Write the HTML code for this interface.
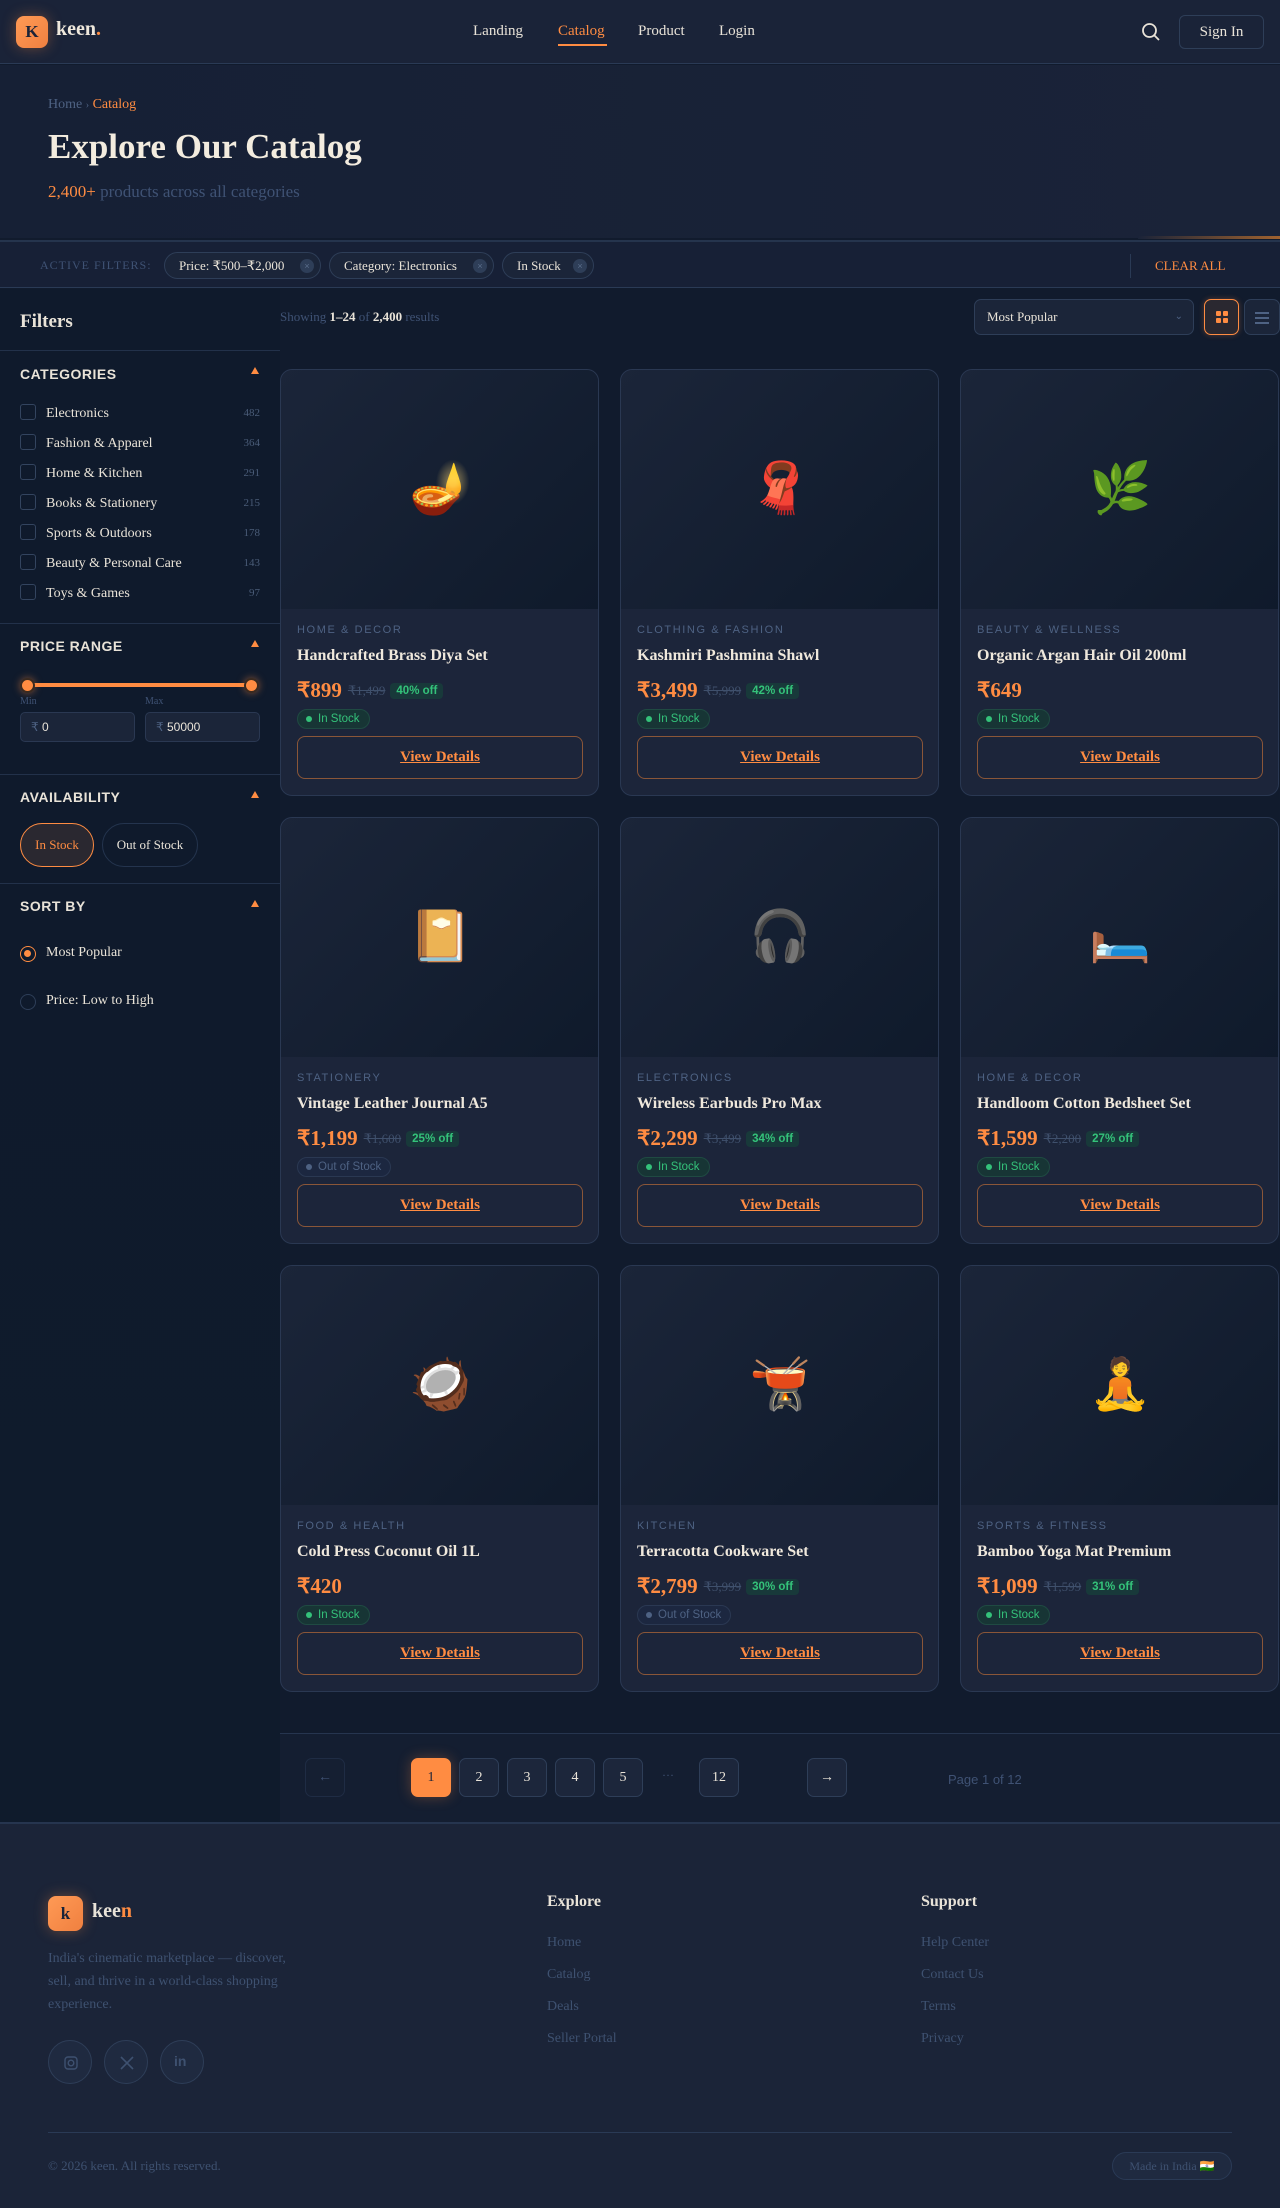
<!DOCTYPE html>
<html><head><meta charset="utf-8">
<style>
*{box-sizing:border-box;margin:0;padding:0}
body{width:1280px;height:2208px;background:#111b2d;font-family:"Liberation Serif",serif;color:#e9e3d8;position:relative;overflow:hidden}
.abs{position:absolute}
.sans{font-family:"Liberation Sans",sans-serif}
.nav{left:0;top:0;width:1280px;height:64px;background:#1a2338;border-bottom:1px solid #2a3a55}
.logo{left:16px;top:16px;width:32px;height:32px;border-radius:8px;background:linear-gradient(135deg,#ff9a55,#f08040);color:#1a2338;font-size:17px;font-weight:bold;text-align:center;line-height:32px;box-shadow:0 0 14px rgba(255,140,66,.35)}
.navl{top:23px;font-size:15px;color:#e9e3d8}
.hero{left:0;top:65px;width:1280px;height:173px;background:linear-gradient(90deg,#162035,#1a2338)}
.fbar{left:0;top:240px;width:1280px;height:48px;background:#172036;border-top:2px solid #25344d;border-bottom:1px solid #2a3a55}
.chip{top:10px;height:27px;border:1px solid #2e3e58;border-radius:14px;background:#1b2539;font-size:13px;line-height:25px;padding-left:14px;color:#e9e3d8}
.chip i{position:absolute;right:6px;top:6px;width:14px;height:14px;border-radius:7px;background:#2e3e58;font-style:normal;font-size:9px;line-height:14px;text-align:center;color:#5a6d8a;font-family:"Liberation Sans",sans-serif}
.side{left:0;top:289px;width:280px;height:1533px;background:linear-gradient(180deg,#0f1a2c,#0f1b2c)}
.sh{left:20px;font-family:"Liberation Sans",sans-serif;font-weight:bold;font-size:14px;letter-spacing:.5px;color:#e9e3d8}
.tri{left:251px;width:0;height:0;border-left:4px solid transparent;border-right:4px solid transparent;border-bottom:7px solid #ff8c42}
.hr{left:0;width:280px;height:1px;background:#22314a}
.cat{left:20px;font-size:14px;color:#e9e3d8}
.cat b{display:inline-block;width:16px;height:16px;border:1.5px solid #33445f;border-radius:3px;vertical-align:-3px;margin-right:10px}
.cnt{left:240px;width:20px;text-align:right;font-size:11px;color:#4a5c78}
.card{width:319px;height:427px;border:1px solid #2a3852;border-radius:12px;background:#1c253a;overflow:hidden}
.img{left:0;top:0;width:319px;height:239px;background:linear-gradient(135deg,#1b2539,#0f1a2b);font-size:50px;text-align:center;line-height:239px;font-family:"Noto Color Emoji",sans-serif}
.lab{left:16px;top:254px;font-family:"Liberation Sans",sans-serif;font-size:11px;letter-spacing:1.6px;color:#4e6283}
.tit{left:16px;top:277px;font-size:16px;font-weight:bold;color:#efe8dc}
.pr{left:16px;top:308px;font-size:21px;font-weight:bold;color:#ff8c42;white-space:nowrap}
.pr s{font-size:13px;font-weight:normal;color:#3f506c;margin-left:6px;vertical-align:2px}
.pr em{font-style:normal;font-family:"Liberation Sans",sans-serif;font-size:11.5px;font-weight:bold;color:#34c27a;background:#18393a;border-radius:4px;padding:2px 6px;margin-left:5px;vertical-align:3px}
.st{left:16px;top:339px;height:20px;border-radius:10px;font-family:"Liberation Sans",sans-serif;font-size:11.5px;line-height:18px;padding:0 9px 0 20px}
.st:before{content:"";position:absolute;left:8px;top:6px;width:6px;height:6px;border-radius:3px;background:currentColor}
.in{color:#34c27a;background:#173535;border:1px solid #1f4a42}
.out{color:#4e6283;background:#1c2740;border:1px solid #2a3852}
.btn{left:16px;top:366px;width:286px;height:43px;border:1px solid #8a5638;border-radius:8px;text-align:center;line-height:41px;font-size:15px;font-weight:bold;color:#ff8c42;text-decoration:underline}
.pg{top:1758px;width:40px;height:39px;border:1px solid #2e3e58;border-radius:7px;background:#1c263b;text-align:center;line-height:37px;font-size:14px;color:#e9e3d8}
.foot{left:0;top:1822px;width:1280px;height:386px;background:#1b2438;border-top:2px solid #26354f}
.fl{font-size:14px;color:#3e5170}
.soc{top:2040px;width:44px;height:44px;border-radius:22px;border:1px solid #2e3e58;background:#1f2a40}
</style></head><body>

<div class="abs nav"></div>
<div class="abs logo">K</div>
<div class="abs" style="left:56px;top:18px;font-size:20px;font-weight:bold;color:#efe8dc">keen<span style="color:#ff8c42">.</span></div>
<div class="abs navl" style="left:473px">Landing</div>
<div class="abs navl" style="left:558px;color:#ff8c42">Catalog</div>
<div class="abs" style="left:558px;top:44px;width:49px;height:2px;background:#ff8c42"></div>
<div class="abs navl" style="left:638px">Product</div>
<div class="abs navl" style="left:719px">Login</div>
<svg class="abs" style="left:1141px;top:22px" width="20" height="20" viewBox="0 0 20 20" fill="none" stroke="#e9e3d8" stroke-width="1.8"><circle cx="8.5" cy="8.5" r="6.5"/><path d="M13.5 13.5L18 18"/></svg>
<div class="abs" style="left:1179px;top:15px;width:85px;height:34px;border:1px solid #2e3e58;border-radius:6px;text-align:center;line-height:32px;font-size:15px">Sign In</div>

<div class="abs hero"></div>
<div class="abs" style="left:48px;top:97px;font-size:14px;color:#4e6283">Home <span style="font-size:10px">›</span> <span style="color:#ff8c42">Catalog</span></div>
<div class="abs" style="left:48px;top:127px;font-size:35px;font-weight:bold;color:#f3ecdf">Explore Our Catalog</div>
<div class="abs" style="left:48px;top:182px;font-size:17px;color:#3f5274"><span style="color:#ff8c42">2,400+</span> products across all categories</div>
<div class="abs" style="left:1138px;top:236px;width:142px;height:3px;background:linear-gradient(90deg,#1a2338,#a0622f)"></div>

<div class="abs fbar">
 <div class="abs sans" style="left:40px;top:16px;font-size:12px;letter-spacing:1px;color:#3f5274;font-family:'Liberation Serif',serif">ACTIVE FILTERS:</div>
 <div class="abs chip" style="left:164px;width:157px">Price: ₹500–₹2,000<i>×</i></div>
 <div class="abs chip" style="left:329px;width:165px">Category: Electronics<i>×</i></div>
 <div class="abs chip" style="left:502px;width:92px">In Stock<i>×</i></div>
 <div class="abs" style="left:1130px;top:12px;width:1px;height:24px;background:#2a3a55"></div>
 <div class="abs" style="left:1155px;top:16px;font-size:13px;color:#ff8c42">CLEAR ALL</div>
</div>

<div class="abs side"></div>
<div class="abs" style="left:20px;top:311px;font-size:19px;font-weight:bold">Filters</div>
<div class="abs hr" style="top:350px"></div>
<div class="abs sh" style="top:366px">CATEGORIES</div><div class="abs tri" style="top:367px"></div>
<div class="abs cat" style="top:404px"><b></b>Electronics</div><div class="abs cnt" style="top:407px">482</div>
<div class="abs cat" style="top:434px"><b></b>Fashion &amp; Apparel</div><div class="abs cnt" style="top:437px">364</div>
<div class="abs cat" style="top:464px"><b></b>Home &amp; Kitchen</div><div class="abs cnt" style="top:467px">291</div>
<div class="abs cat" style="top:494px"><b></b>Books &amp; Stationery</div><div class="abs cnt" style="top:497px">215</div>
<div class="abs cat" style="top:524px"><b></b>Sports &amp; Outdoors</div><div class="abs cnt" style="top:527px">178</div>
<div class="abs cat" style="top:554px"><b></b>Beauty &amp; Personal Care</div><div class="abs cnt" style="top:557px">143</div>
<div class="abs cat" style="top:584px"><b></b>Toys &amp; Games</div><div class="abs cnt" style="top:587px">97</div>
<div class="abs hr" style="top:623px"></div>
<div class="abs sh" style="top:638px">PRICE RANGE</div><div class="abs tri" style="top:640px"></div>
<div class="abs" style="left:28px;top:683px;width:224px;height:4px;background:#ff8c42;border-radius:2px"></div>
<div class="abs" style="left:20px;top:678px;width:15px;height:15px;border-radius:8px;background:#ff8c42;border:2px solid #3a2a20;box-shadow:0 0 8px rgba(255,140,66,.5)"></div>
<div class="abs" style="left:244px;top:678px;width:15px;height:15px;border-radius:8px;background:#ff8c42;border:2px solid #3a2a20;box-shadow:0 0 8px rgba(255,140,66,.5)"></div>
<div class="abs" style="left:20px;top:696px;font-size:10px;color:#3f5274">Min</div>
<div class="abs" style="left:145px;top:696px;font-size:10px;color:#3f5274">Max</div>
<div class="abs sans" style="left:20px;top:712px;width:115px;height:30px;border:1px solid #2a3852;border-radius:5px;background:#1b2539;font-size:12px;line-height:28px;padding-left:10px"><span style="color:#4e6283">₹</span> 0</div>
<div class="abs sans" style="left:145px;top:712px;width:115px;height:30px;border:1px solid #2a3852;border-radius:5px;background:#1b2539;font-size:12px;line-height:28px;padding-left:10px"><span style="color:#4e6283">₹</span> 50000</div>
<div class="abs hr" style="top:774px"></div>
<div class="abs sh" style="top:789px">AVAILABILITY</div><div class="abs tri" style="top:791px"></div>
<div class="abs" style="left:20px;top:823px;width:74px;height:44px;border:1px solid #ff8c42;border-radius:22px;background:#2a2830;text-align:center;line-height:42px;font-size:13px;color:#ff8c42">In Stock</div>
<div class="abs" style="left:102px;top:823px;width:96px;height:44px;border:1px solid #24344e;border-radius:22px;text-align:center;line-height:42px;font-size:13px">Out of Stock</div>
<div class="abs hr" style="top:883px"></div>
<div class="abs sh" style="top:898px">SORT BY</div><div class="abs tri" style="top:900px"></div>
<div class="abs" style="left:20px;top:946px;width:16px;height:16px;border-radius:8px;border:1.5px solid #ff8c42"><div style="margin:3px;width:7px;height:7px;border-radius:4px;background:#ff8c42"></div></div>
<div class="abs" style="left:46px;top:945px;font-size:14px">Most Popular</div>
<div class="abs" style="left:20px;top:994px;width:16px;height:16px;border-radius:8px;border:1.5px solid #2e3e58"></div>
<div class="abs" style="left:46px;top:993px;font-size:14px">Price: Low to High</div>

<div class="abs" style="left:280px;top:309px;font-size:13px;color:#3f5274">Showing <b style="color:#e9e3d8">1–24</b> of <b style="color:#e9e3d8">2,400</b> results</div>
<div class="abs" style="left:974px;top:299px;width:220px;height:36px;border:1px solid #2e3e58;border-radius:7px;background:#1b2539;font-size:13px;line-height:34px;padding-left:12px">Most Popular<span class="abs sans" style="right:10px;top:0;font-size:10px;color:#4e6283">⌄</span></div>
<div class="abs" style="left:1204px;top:299px;width:35px;height:36px;border:1px solid #ff8c42;border-radius:7px;background:#2a2830;box-shadow:0 0 6px rgba(255,140,66,.3)">
 <div class="abs" style="left:11px;top:11px;width:5px;height:5px;background:#ff8c42;border-radius:1px"></div><div class="abs" style="left:18px;top:11px;width:5px;height:5px;background:#ff8c42;border-radius:1px"></div>
 <div class="abs" style="left:11px;top:18px;width:5px;height:5px;background:#ff8c42;border-radius:1px"></div><div class="abs" style="left:18px;top:18px;width:5px;height:5px;background:#ff8c42;border-radius:1px"></div></div>
<div class="abs" style="left:1244px;top:299px;width:36px;height:36px;border:1px solid #2e3e58;border-radius:7px;background:#1b2539">
 <div class="abs" style="left:10px;top:12px;width:14px;height:2px;background:#4e6283"></div><div class="abs" style="left:10px;top:17px;width:14px;height:2px;background:#4e6283"></div><div class="abs" style="left:10px;top:22px;width:14px;height:2px;background:#4e6283"></div></div>

<!-- Row 1 -->
<div class="abs card" style="left:280px;top:369px"><div class="abs img">🪔</div><div class="abs lab">HOME &amp; DECOR</div><div class="abs tit">Handcrafted Brass Diya Set</div><div class="abs pr">₹899<s>₹1,499</s><em>40% off</em></div><div class="abs st in">In Stock</div><div class="abs btn">View Details</div></div>
<div class="abs card" style="left:620px;top:369px"><div class="abs img">🧣</div><div class="abs lab">CLOTHING &amp; FASHION</div><div class="abs tit">Kashmiri Pashmina Shawl</div><div class="abs pr">₹3,499<s>₹5,999</s><em>42% off</em></div><div class="abs st in">In Stock</div><div class="abs btn">View Details</div></div>
<div class="abs card" style="left:960px;top:369px"><div class="abs img">🌿</div><div class="abs lab">BEAUTY &amp; WELLNESS</div><div class="abs tit">Organic Argan Hair Oil 200ml</div><div class="abs pr">₹649</div><div class="abs st in">In Stock</div><div class="abs btn">View Details</div></div>
<!-- Row 2 -->
<div class="abs card" style="left:280px;top:817px"><div class="abs img">📔</div><div class="abs lab">STATIONERY</div><div class="abs tit">Vintage Leather Journal A5</div><div class="abs pr">₹1,199<s>₹1,600</s><em>25% off</em></div><div class="abs st out">Out of Stock</div><div class="abs btn">View Details</div></div>
<div class="abs card" style="left:620px;top:817px"><div class="abs img">🎧</div><div class="abs lab">ELECTRONICS</div><div class="abs tit">Wireless Earbuds Pro Max</div><div class="abs pr">₹2,299<s>₹3,499</s><em>34% off</em></div><div class="abs st in">In Stock</div><div class="abs btn">View Details</div></div>
<div class="abs card" style="left:960px;top:817px"><div class="abs img">🛏️</div><div class="abs lab">HOME &amp; DECOR</div><div class="abs tit">Handloom Cotton Bedsheet Set</div><div class="abs pr">₹1,599<s>₹2,200</s><em>27% off</em></div><div class="abs st in">In Stock</div><div class="abs btn">View Details</div></div>
<!-- Row 3 -->
<div class="abs card" style="left:280px;top:1265px"><div class="abs img">🥥</div><div class="abs lab">FOOD &amp; HEALTH</div><div class="abs tit">Cold Press Coconut Oil 1L</div><div class="abs pr">₹420</div><div class="abs st in">In Stock</div><div class="abs btn">View Details</div></div>
<div class="abs card" style="left:620px;top:1265px"><div class="abs img">🫕</div><div class="abs lab">KITCHEN</div><div class="abs tit">Terracotta Cookware Set</div><div class="abs pr">₹2,799<s>₹3,999</s><em>30% off</em></div><div class="abs st out">Out of Stock</div><div class="abs btn">View Details</div></div>
<div class="abs card" style="left:960px;top:1265px"><div class="abs img">🧘</div><div class="abs lab">SPORTS &amp; FITNESS</div><div class="abs tit">Bamboo Yoga Mat Premium</div><div class="abs pr">₹1,099<s>₹1,599</s><em>31% off</em></div><div class="abs st in">In Stock</div><div class="abs btn">View Details</div></div>

<!-- Pagination -->
<div class="abs" style="left:280px;top:1733px;width:1000px;height:89px;background:#141e31;border-top:1px solid #26354f"></div>
<div class="abs pg" style="left:305px;background:#151f32;border-color:#1f2c44;color:#3f5274">←</div>
<div class="abs pg" style="left:411px;background:#ff8c42;border-color:#ff8c42;color:#1a2338;box-shadow:0 0 14px rgba(255,140,66,.3)">1</div>
<div class="abs pg" style="left:459px">2</div>
<div class="abs pg" style="left:507px">3</div>
<div class="abs pg" style="left:555px">4</div>
<div class="abs pg" style="left:603px">5</div>
<div class="abs" style="left:662px;top:1768px;font-size:12px;color:#3f5274">···</div>
<div class="abs pg" style="left:699px">12</div>
<div class="abs pg" style="left:807px">→</div>
<div class="abs sans" style="left:948px;top:1772px;font-size:13px;color:#3f5274">Page 1 of 12</div>

<!-- Footer -->
<div class="abs foot"></div>
<div class="abs logo" style="left:48px;top:1896px;width:35px;height:35px;line-height:35px">k</div>
<div class="abs" style="left:92px;top:1900px;font-size:20px;font-weight:bold">kee<span style="color:#ff8c42">n</span></div>
<div class="abs" style="left:48px;top:1947px;width:260px;font-size:14px;line-height:23px;color:#3e5170">India's cinematic marketplace — discover, sell, and thrive in a world-class shopping experience.</div>
<div class="abs soc" style="left:48px"><svg class="abs" style="left:14px;top:14px" width="16" height="16" viewBox="0 0 16 16" fill="none" stroke="#3e5170" stroke-width="1.4"><rect x="2" y="2" width="12" height="12" rx="3"/><circle cx="8" cy="8" r="2.8"/></svg></div>
<div class="abs soc" style="left:104px"><svg class="abs" style="left:14px;top:14px" width="16" height="16" viewBox="0 0 16 16" stroke="#3e5170" stroke-width="1.6"><path d="M2 2L14 14M14 2L2 14"/></svg></div>
<div class="abs soc" style="left:160px"><div class="abs sans" style="left:13px;top:12px;font-size:14px;font-weight:bold;color:#3e5170">in</div></div>
<div class="abs" style="left:547px;top:1893px;font-size:16px;font-weight:bold">Explore</div>
<div class="abs fl" style="left:547px;top:1935px">Home</div>
<div class="abs fl" style="left:547px;top:1967px">Catalog</div>
<div class="abs fl" style="left:547px;top:1999px">Deals</div>
<div class="abs fl" style="left:547px;top:2031px">Seller Portal</div>
<div class="abs" style="left:921px;top:1893px;font-size:16px;font-weight:bold">Support</div>
<div class="abs fl" style="left:921px;top:1935px">Help Center</div>
<div class="abs fl" style="left:921px;top:1967px">Contact Us</div>
<div class="abs fl" style="left:921px;top:1999px">Terms</div>
<div class="abs fl" style="left:921px;top:2031px">Privacy</div>
<div class="abs" style="left:48px;top:2132px;width:1184px;height:1px;background:#2a3a55"></div>
<div class="abs" style="left:48px;top:2158px;font-size:13px;color:#3e5170">© 2026 keen. All rights reserved.</div>
<div class="abs" style="left:1112px;top:2152px;width:120px;height:28px;border:1px solid #2a3a55;border-radius:14px;background:#1f2a40;font-size:12px;line-height:26px;text-align:center;color:#3e5170">Made in India 🇮🇳</div>
</body></html>
